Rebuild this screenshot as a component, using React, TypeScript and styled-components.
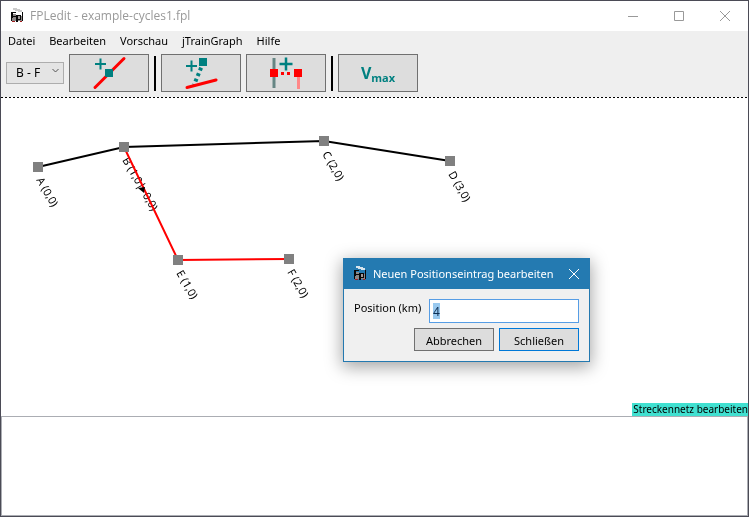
import React, { useState } from 'react';
import styled, { createGlobalStyle } from 'styled-components';

const GlobalStyle = createGlobalStyle`
  *, *::before, *::after { box-sizing: border-box; }
  html, body, #root { height: 100%; }
  body { margin: 0; background: #fff; color: #000; font: 11px/16px "Noto Sans", "Open Sans", sans-serif; }
  button, input, select, textarea { font: inherit; color: inherit; margin: 0; border-radius: 0; }
  svg { flex: none; }
`;

const Window = styled.div`
  position: relative;
  display: flex;
  flex-direction: column;
  min-height: 100%;
  border: 1px solid #4b4b56;
  background: #fff;
`;

const TitleBar = styled.header`
  display: flex;
  align-items: center;
  height: 30px;
  padding-left: 8px;
  gap: 5px;
  color: #999;
`;

const Title = styled.h1`
  flex: 1;
  margin: 0;
  font: 400 12px/16px "Open Sans", sans-serif;
`;

const CaptionButtons = styled.div`
  display: flex;
`;

const CaptionButton = styled.button`
  display: flex;
  align-items: center;
  justify-content: center;
  width: 46px;
  height: 30px;
  padding: 0;
  border: 0;
  background: none;
`;

const MenuBar = styled.nav`
  display: flex;
  gap: 14px;
  height: 20px;
  padding: 2px 7px;
  background: #efefef;
`;

const MenuItem = styled.button`
  padding: 0;
  border: 0;
  background: none;
`;

const Toolbar = styled.div`
  display: flex;
  align-items: center;
  gap: 5px;
  padding: 3px 5px 5px;
  background: #efefef;
`;

const RouteSelect = styled.div`
  position: relative;
  width: 58px;
  height: 22px;

  select {
    appearance: none;
    width: 100%;
    height: 100%;
    padding: 0 0 0 9px;
    border: 1px solid #adadad;
    background: #e4e4e4;
    font-size: 12px;
  }

  svg {
    position: absolute;
    right: 5px;
    top: 6px;
    pointer-events: none;
  }
`;

const ToolButton = styled.button`
  display: flex;
  align-items: center;
  justify-content: center;
  width: 80px;
  height: 38px;
  padding: 0;
  border: 1px solid #707070;
  background: #ddd;
`;

const Separator = styled.div`
  width: 2px;
  height: 35px;
  background: #000;
`;

const Speed = styled.span`
  color: #008080;
  font: 700 16px/20px "Open Sans", sans-serif;

  sub {
    font-size: 11px;
    line-height: 12px;
    vertical-align: -3px;
  }
`;

const DashedRule = styled.div`
  height: 1px;
  background: repeating-linear-gradient(to right, #000 0 2px, #fff 2px 4px);
`;

const Network = styled.main`
  flex: 1;
  display: flex;
  flex-direction: column;
  justify-content: space-between;

  > svg {
    display: block;
    overflow: visible;
    font-size: 11px;
  }
`;

const StatusTag = styled.div`
  align-self: flex-end;
  height: 13px;
  padding: 0 0 0 1px;
  background: #40e0d0;
  font-size: 10px;
  line-height: 13px;
`;

const Log = styled.textarea`
  display: block;
  width: 100%;
  height: 100px;
  border: 1px solid #abadb3;
  background: #fff;
  resize: none;
  outline: 0;
`;

const Dialog = styled.section`
  position: absolute;
  left: 342px;
  top: 257px;
  width: 247px;
  border: 1px solid #2479b0;
  background: #f0f0f0;
  box-shadow: 0 4px 16px 1px rgba(0, 0, 0, 0.36);
`;

const DialogTitleBar = styled.header`
  display: flex;
  align-items: center;
  gap: 5px;
  height: 30px;
  padding-left: 8px;
  background: #247ab1;
  color: #fff;
`;

const DialogTitle = styled.h2`
  flex: 1;
  margin: 0;
  font-size: 11px;
  font-weight: 400;
  white-space: nowrap;
`;

const DialogClose = styled(CaptionButton)`
  flex: none;
  width: 30px;
`;

const DialogForm = styled.form`
  display: flex;
  flex-direction: column;
  gap: 5px;
  padding: 10px;
`;

const Field = styled.div`
  display: flex;
  justify-content: space-between;

  label {
    padding-top: 1px;
    white-space: nowrap;
  }
`;

const ValueBox = styled.div`
  position: relative;

  input {
    display: block;
    width: 150px;
    height: 24px;
    padding: 0 3px;
    border: 1px solid #569de5;
    background: #fff;
    color: #173c5a;
    font-size: 12px;
    outline: 0;
  }

  &::before {
    content: "";
    position: absolute;
    left: 4px;
    top: 4px;
    width: 7px;
    height: 16px;
    background: #99c9ef;
    mix-blend-mode: multiply;
    pointer-events: none;
  }
`;

const Actions = styled.div`
  display: flex;
  justify-content: flex-end;
  gap: 5px;
`;

const ActionButton = styled.button<{ $primary?: boolean }>`
  width: 80px;
  height: 23px;
  padding: 2px 0 0;
  border: 1px solid ${(p) => (p.$primary ? '#0078d7' : '#707070')};
  background: #ddd;
`;

const AppIcon = ({ smoke = '#cbcbcb' }: { smoke?: string }) => (
  <svg width="16" height="16" viewBox="0 0 16 16" shapeRendering="crispEdges" aria-hidden="true">
    <path d="M4 0h4v1h3v1h2v2h-4v-1h-3v-1h-2z" fill={smoke} />
    <path d="M3 6h4v2h6v5H3z" fill="#8c8787" />
    <path d="M2 4h5v1H4v3h3v1H4v1H3v3H2zM7 7h5v5H9v2H7zM13 4h1v9h-1z" fill="#080808" />
    <path d="M9 8h2v3H9z" fill="#a19b9b" />
    <path d="M3 13h3v1H3zM11 13h2v1h-2z" fill="#a51f1f" />
  </svg>
);

const CloseIcon = () => (
  <svg width="10" height="10" viewBox="0 0 10 10" stroke="currentColor" aria-hidden="true">
    <path d="M0 0L10 10M10 0L0 10" />
  </svg>
);

const AddStationIcon = () => (
  <svg width="78" height="36" viewBox="0 0 78 36" aria-hidden="true">
    <path d="M25 32.500L54 3.500" stroke="#f00" strokeWidth="3" strokeLinecap="round" />
    <path d="M35 14h8v8h-8z" fill="#008080" />
    <path d="M25 9h11M30.500 3.500v11" stroke="#008080" strokeWidth="2" />
  </svg>
);

const AddBranchIcon = () => (
  <svg width="78" height="36" viewBox="0 0 78 36" aria-hidden="true">
    <path d="M41 8L32 30" stroke="#008080" strokeWidth="4" strokeDasharray="3 3" strokeDashoffset="1" />
    <path d="M25 32.500L54 25" stroke="#f00" strokeWidth="3" strokeLinecap="round" />
    <path d="M37 3h8v8h-8z" fill="#008080" />
    <path d="M24 11h11M29.500 5.500v11" stroke="#008080" strokeWidth="2" />
  </svg>
);

const JoinLinesIcon = () => (
  <svg width="78" height="36" viewBox="0 0 78 36" aria-hidden="true">
    <path d="M27 3v30" stroke="#668684" strokeWidth="3" />
    <path d="M51.500 18v16" stroke="#ff8888" strokeWidth="3" />
    <path d="M34 18.500h12" stroke="#f00" strokeWidth="3" strokeDasharray="3 3" />
    <path d="M23 14h8v8h-8zM47 14h8v8h-8z" fill="#f00" />
    <path d="M32.500 9h13M39 2.500v13" stroke="#008080" strokeWidth="2.500" />
  </svg>
);

const stations = [
  { x: 37, y: 69, label: 'A (0,0)' },
  { x: 123, y: 49, label: 'B (1,0|\u00a0\u00a00,0)' },
  { x: 323, y: 43, label: 'C (2,0)' },
  { x: 449, y: 63, label: 'D (3,0)' },
  { x: 177, y: 162, label: 'E (1,0)' },
  { x: 288, y: 161, label: 'F (2,0)' },
];

const NetworkDiagram = () => (
  <svg width="480" height="215" viewBox="0 0 480 215" role="img" aria-label="Streckennetz">
    {stations.map((s) => (
      <text key={s.label} transform={`translate(${s.x - 2} ${s.y + 13}) rotate(60)`}>{s.label}</text>
    ))}
    <path d="M37 69L123 49L323 43L449 63" fill="none" stroke="#000" strokeWidth="2" />
    <path d="M123 49L177 162L288 161" fill="none" stroke="#f00" strokeWidth="2" />
    <path d="M137 90l7-1-1 6z" />
    {stations.map((s) => (
      <rect key={s.label} x={s.x - 5} y={s.y - 5} width="10" height="10" fill="#808080" />
    ))}
  </svg>
);

export default function App() {
  const [position, setPosition] = useState('4');
  return (
    <>
      <GlobalStyle />
      <Window>
        <TitleBar>
          <AppIcon />
          <Title>FPLedit - example-cycles1.fpl</Title>
          <CaptionButtons>
            <CaptionButton aria-label="Minimieren">
              <svg width="10" height="10" stroke="currentColor" aria-hidden="true"><path d="M0 5.500h10" /></svg>
            </CaptionButton>
            <CaptionButton aria-label="Maximieren">
              <svg width="10" height="10" fill="none" stroke="currentColor" aria-hidden="true"><path d="M.5.5h9v9h-9z" /></svg>
            </CaptionButton>
            <CaptionButton aria-label="Beenden"><CloseIcon /></CaptionButton>
          </CaptionButtons>
        </TitleBar>
        <MenuBar>
          {['Datei', 'Bearbeiten', 'Vorschau', 'jTrainGraph', 'Hilfe'].map((item) => (
            <MenuItem key={item}>{item}</MenuItem>
          ))}
        </MenuBar>
        <Toolbar>
          <RouteSelect>
            <select aria-label="Strecke" defaultValue="B - F"><option>B - F</option></select>
            <svg width="7" height="6" fill="none" stroke="#555" aria-hidden="true"><path d="M.5 1l3 3 3-3" /></svg>
          </RouteSelect>
          <ToolButton aria-label="Station hinzufügen"><AddStationIcon /></ToolButton>
          <Separator />
          <ToolButton aria-label="Strecke abzweigen"><AddBranchIcon /></ToolButton>
          <ToolButton aria-label="Strecken verbinden"><JoinLinesIcon /></ToolButton>
          <Separator />
          <ToolButton><Speed>V<sub>max</sub></Speed></ToolButton>
        </Toolbar>
        <DashedRule />
        <Network>
          <NetworkDiagram />
          <StatusTag>Streckennetz bearbeiten</StatusTag>
        </Network>
        <Log aria-label="Protokoll" readOnly />
        <Dialog role="dialog" aria-labelledby="dialog-title">
          <DialogTitleBar>
            <AppIcon smoke="#d7e4ec" />
            <DialogTitle id="dialog-title">Neuen Positionseintrag bearbeiten</DialogTitle>
            <DialogClose aria-label="Dialog schließen"><CloseIcon /></DialogClose>
          </DialogTitleBar>
          <DialogForm onSubmit={(e) => e.preventDefault()}>
            <Field>
              <label htmlFor="position">Position (km)</label>
              <ValueBox>
                <input id="position" value={position} onChange={(e) => setPosition(e.target.value)} />
              </ValueBox>
            </Field>
            <Actions>
              <ActionButton type="button">Abbrechen</ActionButton>
              <ActionButton $primary>Schließen</ActionButton>
            </Actions>
          </DialogForm>
        </Dialog>
      </Window>
    </>
  );
}
